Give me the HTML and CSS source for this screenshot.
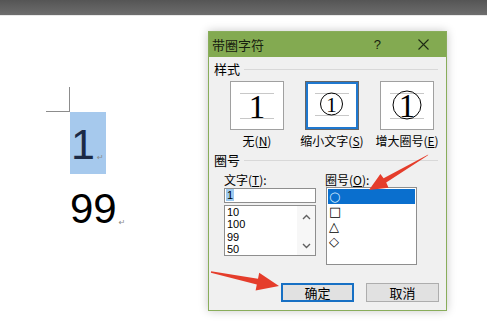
FILE: index.html
```html
<!DOCTYPE html>
<html>
<head>
<meta charset="utf-8">
<link rel="stylesheet" href="styles.css">
</head>
<body>
<div class="topbar"></div>
<div class="doc">
  <div class="cropmark"></div>
  <div class="sel-line"><span class="big sel">1</span><span class="para">↵</span></div>
  <div class="line2"><span class="big">99</span><span class="para">↵</span></div>
</div>

<div class="dialog">
  <div class="titlebar">
    <span class="title">带圈字符</span>
    <span class="help">?</span>
    <svg class="close" width="11" height="11" viewBox="0 0 11 11"><path d="M0.5 0.5 L10.5 10.5 M10.5 0.5 L0.5 10.5" stroke="#1e2a14" stroke-width="1.1" fill="none"/></svg>
  </div>
  <div class="body">
    <div class="group"><span>样式</span><i></i></div>
    <div class="styles">
      <div class="opt">
        <div class="box">
          <svg width="52" height="47" viewBox="0 0 52 47"><line x1="9" y1="11.5" x2="43" y2="11.5" stroke="#c8c8c8"/><line x1="9" y1="36.5" x2="43" y2="36.5" stroke="#c8c8c8"/><text x="26" y="36" font-family="Liberation Serif" font-size="33" text-anchor="middle" fill="#000">1</text></svg>
        </div>
        <div class="lbl">无(<u>N</u>)</div>
      </div>
      <div class="opt">
        <div class="box on">
          <svg width="52" height="47" viewBox="0 0 52 47"><line x1="9" y1="11.5" x2="43" y2="11.5" stroke="#c8c8c8"/><line x1="9" y1="33.5" x2="43" y2="33.5" stroke="#c8c8c8"/><circle cx="25.5" cy="22" r="11" fill="none" stroke="#000" stroke-width="1"/><text x="25.5" y="29.5" font-family="Liberation Serif" font-size="21" text-anchor="middle" fill="#000">1</text></svg>
        </div>
        <div class="lbl">缩小文字(<u>S</u>)</div>
      </div>
      <div class="opt">
        <div class="box">
          <svg width="52" height="47" viewBox="0 0 52 47"><line x1="9" y1="11.5" x2="43" y2="11.5" stroke="#c8c8c8"/><line x1="9" y1="36.5" x2="43" y2="36.5" stroke="#c8c8c8"/><circle cx="26" cy="23" r="14" fill="none" stroke="#000" stroke-width="1"/><text x="26" y="35" font-family="Liberation Serif" font-size="33" text-anchor="middle" fill="#000">1</text></svg>
        </div>
        <div class="lbl">增大圈号(<u>E</u>)</div>
      </div>
    </div>
    <div class="group g2"><span>圈号</span><i></i></div>
    <div class="cols">
      <div class="col left">
        <div class="flbl">文字(<u>T</u>):</div>
        <div class="input"><span class="hl">1</span></div>
        <div class="list">
          <div class="items">
            <div>10</div><div>100</div><div>99</div><div>50</div>
          </div>
          <div class="scroll">
            <svg width="9" height="6" viewBox="0 0 9 6"><path d="M1 5 L4.5 1.5 L8 5" stroke="#606060" stroke-width="1.4" fill="none"/></svg>
            <svg width="9" height="6" viewBox="0 0 9 6"><path d="M1 1 L4.5 4.5 L8 1" stroke="#606060" stroke-width="1.4" fill="none"/></svg>
          </div>
        </div>
      </div>
      <div class="col right">
        <div class="flbl">圈号(<u>O</u>):</div>
        <div class="list2">
          <div class="row selrow">○</div>
          <div class="row">□</div>
          <div class="row">△</div>
          <div class="row">◇</div>
        </div>
      </div>
    </div>
    <div class="buttons">
      <div class="btn ok">确定</div>
      <div class="btn">取消</div>
    </div>
  </div>
</div>

<svg class="arrows" width="487" height="325" viewBox="0 0 487 325">
  <polygon fill="#e53d2b" points="428.3,154.6 427.7,155.4 386.2,182.6 388.6,187.7 369,190 380.4,173.9 383.6,178.2"/>
  <polygon fill="#e53d2b" points="211.1,271.3 210.9,272.7 256.8,284.5 255.6,290.4 279,286 259.2,272.8 258,278.7"/>
</svg>
</body>
</html>
```

FILE: styles.css
```css
* { box-sizing: border-box; }
html, body { margin: 0; padding: 0; }
body {
  width: 487px;
  height: 325px;
  overflow: hidden;
  background: #ffffff;
  position: relative;
  font-family: "Noto Sans CJK SC", "Liberation Sans", sans-serif;
}
.topbar {
  height: 16px;
  background: linear-gradient(#555555, #6d6d6d);
  border-bottom: 1px solid #e9e9e9;
}
.doc {
  padding: 71px 0 0 46px;
}
.cropmark {
  width: 24px;
  height: 25px;
  border-right: 1px solid #8c8c8c;
  border-bottom: 1px solid #8c8c8c;
}
.sel-line {
  margin-left: 24px;
  width: 36px;
  height: 62px;
  background: #a6c9ed;
  display: flex;
  align-items: flex-start;
  padding: 8px 0 0 1px;
}
.big {
  font-family: "Liberation Sans", sans-serif;
  font-size: 43px;
  line-height: 48px;
  color: #000;
}
.sel { color: #1b2a46; }
.para {
  font-family: "DejaVu Sans", sans-serif;
  font-size: 8px;
  color: #8a8a8a;
  align-self: flex-end;
  margin: 0 0 12px 2px;
}
.line2 {
  margin: 11px 0 0 24px;
  display: flex;
  align-items: flex-start;
}
.line2 .big { font-size: 42px; }
.line2 .para { margin: 0 0 6px 2px; }

.dialog {
  position: absolute;
  left: 208px;
  top: 31px;
  width: 239px;
  border: 1px solid #89ad5b;
  background: #f0f0f0;
  box-shadow: 0 0 9px rgba(0,0,0,0.22);
}
.titlebar {
  height: 25px;
  background: #83aa51;
  display: flex;
  align-items: center;
  padding-left: 3px;
  color: #17200f;
}
.title { font-size: 13px; line-height: 14px; flex: 1; }
.help { font-size: 13px; font-family: "Liberation Sans", sans-serif; margin-right: 37px; }
.close { margin-right: 17px; }

.body {
  padding: 5px 7px 8px 5px;
  font-size: 12px;
  color: #000;
}
.group {
  display: flex;
  align-items: center;
  height: 14px;
  font-size: 13px;
  line-height: 14px;
}
.group i {
  flex: 1;
  border-top: 1px solid #d8d8d8;
  margin-left: 4px;
  margin-right: 1px;
}
.styles {
  margin-top: 5px;
  padding-left: 16px;
  display: flex;
  gap: 21px;
}
.opt {
  width: 54px;
  display: flex;
  flex-direction: column;
  align-items: center;
}
.box {
  width: 54px;
  height: 49px;
  background: #fff;
  border: 1px solid #a0a0a0;
}
.box svg { display: block; }
.box.on {
  border-color: #666;
  box-shadow: inset 0 0 0 2px #1f78cf;
}
.lbl {
  white-space: nowrap;
  margin-top: 4px;
  font-size: 12px;
  line-height: 13px;
}
u { text-decoration-thickness: 1px; text-underline-offset: 1px; }
.g2 { margin-top: 6px; }
.cols {
  margin-top: 6px;
  display: flex;
  gap: 9px;
  padding-left: 10px;
}
.col { width: 92px; }
.flbl { font-size: 12px; line-height: 14px; height: 14px; }
.input {
  margin-top: 1px;
  height: 15px;
  background: #fff;
  border: 1px solid #8e8e8e;
  padding-left: 1px;
  font-family: "Liberation Sans", sans-serif;
  font-size: 11px;
  line-height: 13px;
}
.hl { background: #9dcaf0; padding: 0 1px; }
.list {
  margin-top: 2px;
  height: 51px;
  background: #fff;
  border: 1px solid #8e8e8e;
  display: flex;
}
.items {
  flex: 1;
  padding: 0 0 0 2px;
  font-family: "Liberation Sans", sans-serif;
  font-size: 11px;
  line-height: 12.3px;
}
.scroll {
  width: 18px;
  background: #f7f7f7;
  display: flex;
  flex-direction: column;
  align-items: center;
  justify-content: space-between;
  padding: 8px 0 6px;
}
.scroll svg { display: block; }
.right .list2 { margin-left: 1px; }
.list2 {
  width: 91px;
  height: 78px;
  background: #fff;
  border: 1px solid #8e8e8e;
  padding: 0;
}
.row {
  height: 15px;
  line-height: 15px;
  font-family: "DejaVu Sans", sans-serif;
  font-size: 13px;
  padding-left: 2px;
  color: #000;
}
.selrow { background: #0a6fce; color: #d6ecff; margin: 1px 1px 0; padding-left: 1px; height: 15px; }
.buttons {
  margin-top: 18px;
  display: flex;
  justify-content: flex-end;
  gap: 12px;
}
.btn {
  width: 73px;
  height: 19px;
  background: #e1e1e1;
  border: 1px solid #adadad;
  text-align: center;
  font-size: 13px;
  line-height: 17px;
}
.btn.ok {
  border: 2px solid #1770c4;
  line-height: 15px;
}
.arrows {
  position: absolute;
  left: 0;
  top: 0;
}
```
